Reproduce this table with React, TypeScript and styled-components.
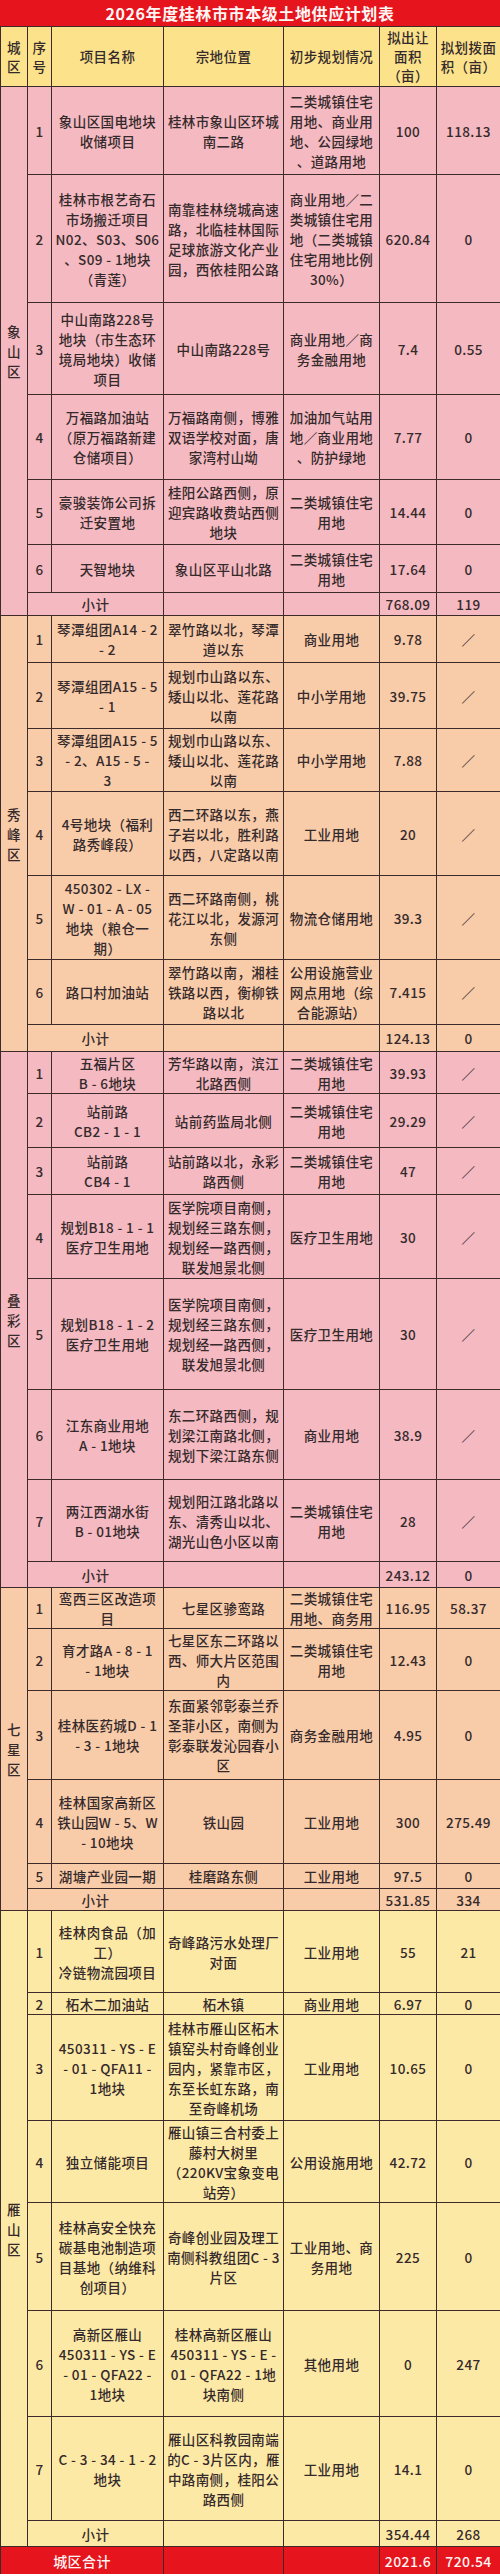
import React from "react";
import styled, { createGlobalStyle } from "styled-components";

type Tone = "pink" | "peach" | "cream";

type Plot = {
    no: string;
    name: string[];
    loc: string[];
    plan: string[];
    sell: string;
    alloc: string;
    h: number;
};

type Zone = {
    name: string;
    tone: Tone;
    plots: Plot[];
    subH: number;
    sell: string;
    alloc: string;
};

const tones: Record<Tone, string> = {
    pink: "#f4b9c1",
    peach: "#f8cba9",
    cream: "#fde9a6",
};

const GlobalStyle = createGlobalStyle`
    body {
        margin: 0;
        background: #ffffff;
        font-family: "Noto Sans CJK SC", "Noto Sans", sans-serif;
        color: #352a2b;
    }
`;

const Sheet = styled.div`
    width: 500px;
`;

const TitleBar = styled.div`
    height: 26px;
    background: #e5141d;
    color: #fff6f4;
    font-size: 16px;
    font-weight: 700;
    letter-spacing: 0.6px;
    display: flex;
    align-items: center;
    justify-content: center;
`;

const Table = styled.table`
    width: 500px;
    border-collapse: collapse;
    table-layout: fixed;
    font-size: 13.5px;
    font-weight: 500;
    letter-spacing: 0.4px;
    line-height: 20px;
`;

const HeadRow = styled.tr`
    height: 60px;
`;

const HeadCell = styled.th`
    background: #fce38b;
    border: 1px solid #3d2b2b;
    font-weight: 500;
    line-height: 19px;
    text-align: center;
    vertical-align: middle;
    padding: 0 1px;
`;

const BodyRow = styled.tr<{ $h: number }>`
    height: ${(p) => p.$h}px;
`;

const Cell = styled.td<{ $tone: Tone }>`
    background: ${(p) => tones[p.$tone]};
    border: 1px solid #3d2b2b;
    text-align: center;
    vertical-align: middle;
    padding: 0 1px;
    white-space: nowrap;
`;

const TotalCell = styled.td`
    background: #e5141d;
    color: #fff4f2;
    border: 1px solid #3d2b2b;
    text-align: center;
    vertical-align: middle;
    font-size: 14px;
`;

const Line = styled.span`
    display: block;
`;

const Lines: React.FC<{ items: string[] }> = ({ items }) => (
    <>
        {items.map((t, i) => (
            <Line key={i}>{t}</Line>
        ))}
    </>
);

const yiliao = ["医学院项目南侧，", "规划经三路东侧，", "规划经一路西侧，", "联发旭景北侧"];
const erlei = ["二类城镇住宅", "用地"];

const zones: Zone[] = [
    {
        name: "象山区",
        tone: "pink",
        subH: 23,
        sell: "768.09",
        alloc: "119",
        plots: [
            { no: "1", h: 88, name: ["象山区国电地块", "收储项目"], loc: ["桂林市象山区环城", "南二路"], plan: ["二类城镇住宅", "用地、商业用", "地、公园绿地", "、道路用地"], sell: "100", alloc: "118.13" },
            { no: "2", h: 128, name: ["桂林市根艺奇石", "市场搬迁项目", "N02、S03、S06", "、S09 - 1地块", "（青莲）"], loc: ["南靠桂林绕城高速", "路，北临桂林国际", "足球旅游文化产业", "园，西依桂阳公路"], plan: ["商业用地／二", "类城镇住宅用", "地（二类城镇", "住宅用地比例", "30%）"], sell: "620.84", alloc: "0" },
            { no: "3", h: 92, name: ["中山南路228号", "地块（市生态环", "境局地块）收储", "项目"], loc: ["中山南路228号"], plan: ["商业用地／商", "务金融用地"], sell: "7.4", alloc: "0.55" },
            { no: "4", h: 85, name: ["万福路加油站", "（原万福路新建", "仓储项目）"], loc: ["万福路南侧，博雅", "双语学校对面，唐", "家湾村山坳"], plan: ["加油加气站用", "地／商业用地", "、防护绿地"], sell: "7.77", alloc: "0" },
            { no: "5", h: 65, name: ["豪骏装饰公司拆", "迁安置地"], loc: ["桂阳公路西侧，原", "迎宾路收费站西侧", "地块"], plan: erlei, sell: "14.44", alloc: "0" },
            { no: "6", h: 48, name: ["天智地块"], loc: ["象山区平山北路"], plan: erlei, sell: "17.64", alloc: "0" },
        ],
    },
    {
        name: "秀峰区",
        tone: "peach",
        subH: 27,
        sell: "124.13",
        alloc: "0",
        plots: [
            { no: "1", h: 47, name: ["琴潭组团A14 - 2", "- 2"], loc: ["翠竹路以北，琴潭", "道以东"], plan: ["商业用地"], sell: "9.78", alloc: "／" },
            { no: "2", h: 66, name: ["琴潭组团A15 - 5", "- 1"], loc: ["规划巾山路以东、", "矮山以北、莲花路", "以南"], plan: ["中小学用地"], sell: "39.75", alloc: "／" },
            { no: "3", h: 63, name: ["琴潭组团A15 - 5", "- 2、A15 - 5 -", "3"], loc: ["规划巾山路以东、", "矮山以北、莲花路", "以南"], plan: ["中小学用地"], sell: "7.88", alloc: "／" },
            { no: "4", h: 84, name: ["4号地块（福利", "路秀峰段）"], loc: ["西二环路以东，燕", "子岩以北，胜利路", "以西，八定路以南"], plan: ["工业用地"], sell: "20", alloc: "／" },
            { no: "5", h: 84, name: ["450302 - LX -", "W - 01 - A - 05", "地块（粮仓一", "期）"], loc: ["西二环路南侧，桃", "花江以北，发源河", "东侧"], plan: ["物流仓储用地"], sell: "39.3", alloc: "／" },
            { no: "6", h: 65, name: ["路口村加油站"], loc: ["翠竹路以南，湘桂", "铁路以西，衡柳铁", "路以北"], plan: ["公用设施营业", "网点用地（综", "合能源站）"], sell: "7.415", alloc: "／" },
        ],
    },
    {
        name: "叠彩区",
        tone: "pink",
        subH: 26,
        sell: "243.12",
        alloc: "0",
        plots: [
            { no: "1", h: 42, name: ["五福片区", "B - 6地块"], loc: ["芳华路以南，滨江", "北路西侧"], plan: erlei, sell: "39.93", alloc: "／" },
            { no: "2", h: 54, name: ["站前路", "CB2 - 1 - 1"], loc: ["站前药监局北侧"], plan: erlei, sell: "29.29", alloc: "／" },
            { no: "3", h: 47, name: ["站前路", "CB4 - 1"], loc: ["站前路以北，永彩", "路西侧"], plan: erlei, sell: "47", alloc: "／" },
            { no: "4", h: 84, name: ["规划B18 - 1 - 1", "医疗卫生用地"], loc: yiliao, plan: ["医疗卫生用地"], sell: "30", alloc: "／" },
            { no: "5", h: 111, name: ["规划B18 - 1 - 2", "医疗卫生用地"], loc: yiliao, plan: ["医疗卫生用地"], sell: "30", alloc: "／" },
            { no: "6", h: 90, name: ["江东商业用地", "A - 1地块"], loc: ["东二环路西侧，规", "划梁江南路北侧，", "规划下梁江路东侧"], plan: ["商业用地"], sell: "38.9", alloc: "／" },
            { no: "7", h: 82, name: ["两江西湖水街", "B - 01地块"], loc: ["规划阳江路北路以", "东、清秀山以北、", "湖光山色小区以南"], plan: erlei, sell: "28", alloc: "／" },
        ],
    },
    {
        name: "七星区",
        tone: "peach",
        subH: 22,
        sell: "531.85",
        alloc: "334",
        plots: [
            { no: "1", h: 41, name: ["鸾西三区改造项", "目"], loc: ["七星区骖鸾路"], plan: ["二类城镇住宅", "用地、商务用"], sell: "116.95", alloc: "58.37" },
            { no: "2", h: 62, name: ["育才路A - 8 - 1", "- 1地块"], loc: ["七星区东二环路以", "西、师大片区范围", "内"], plan: erlei, sell: "12.43", alloc: "0" },
            { no: "3", h: 89, name: ["桂林医药城D - 1", "- 3 - 1地块"], loc: ["东面紧邻彰泰兰乔", "圣菲小区，南侧为", "彰泰联发沁园春小", "区"], plan: ["商务金融用地"], sell: "4.95", alloc: "0" },
            { no: "4", h: 84, name: ["桂林国家高新区", "铁山园W - 5、W", "- 10地块"], loc: ["铁山园"], plan: ["工业用地"], sell: "300", alloc: "275.49" },
            { no: "5", h: 25, name: ["湖塘产业园一期"], loc: ["桂磨路东侧"], plan: ["工业用地"], sell: "97.5", alloc: "0" },
        ],
    },
    {
        name: "雁山区",
        tone: "cream",
        subH: 26,
        sell: "354.44",
        alloc: "268",
        plots: [
            { no: "1", h: 82, name: ["桂林肉食品（加", "工）", "冷链物流园项目"], loc: ["奇峰路污水处理厂", "对面"], plan: ["工业用地"], sell: "55", alloc: "21" },
            { no: "2", h: 22, name: ["柘木二加油站"], loc: ["柘木镇"], plan: ["商业用地"], sell: "6.97", alloc: "0" },
            { no: "3", h: 106, name: ["450311 - YS - E", "- 01 - QFA11 -", "1地块"], loc: ["桂林市雁山区柘木", "镇窑头村奇峰创业", "园内，紧靠市区，", "东至长虹东路，南", "至奇峰机场"], plan: ["工业用地"], sell: "10.65", alloc: "0" },
            { no: "4", h: 82, name: ["独立储能项目"], loc: ["雁山镇三合村委上", "藤村大树里", "（220KV宝象变电", "站旁）"], plan: ["公用设施用地"], sell: "42.72", alloc: "0" },
            { no: "5", h: 108, name: ["桂林高安全快充", "碳基电池制造项", "目基地（纳维科", "创项目）"], loc: ["奇峰创业园及理工", "南侧科教组团C - 3", "片区"], plan: ["工业用地、商", "务用地"], sell: "225", alloc: "0" },
            { no: "6", h: 106, name: ["高新区雁山", "450311 - YS - E", "- 01 - QFA22 -", "1地块"], loc: ["桂林高新区雁山", "450311 - YS - E -", "01 - QFA22 - 1地", "块南侧"], plan: ["其他用地"], sell: "0", alloc: "247" },
            { no: "7", h: 104, name: ["C - 3 - 34 - 1 - 2", "地块"], loc: ["雁山区科教园南端", "的C - 3片区内，雁", "中路南侧，桂阳公", "路西侧"], plan: ["工业用地"], sell: "14.1", alloc: "0" },
        ],
    },
];

const ZoneBlock: React.FC<{ zone: Zone }> = ({ zone }) => {
    const t = zone.tone;
    return (
        <>
            {zone.plots.map((p, i) => (
                <BodyRow key={p.no} $h={p.h}>
                    {i === 0 && (
                        <Cell $tone={t} rowSpan={zone.plots.length + 1}>
                            <Lines items={zone.name.split("")} />
                        </Cell>
                    )}
                    <Cell $tone={t}>{p.no}</Cell>
                    <Cell $tone={t}><Lines items={p.name} /></Cell>
                    <Cell $tone={t}><Lines items={p.loc} /></Cell>
                    <Cell $tone={t}><Lines items={p.plan} /></Cell>
                    <Cell $tone={t}>{p.sell}</Cell>
                    <Cell $tone={t}>{p.alloc}</Cell>
                </BodyRow>
            ))}
            <BodyRow $h={zone.subH}>
                <Cell $tone={t} colSpan={2}>小计</Cell>
                <Cell $tone={t} />
                <Cell $tone={t} />
                <Cell $tone={t}>{zone.sell}</Cell>
                <Cell $tone={t}>{zone.alloc}</Cell>
            </BodyRow>
        </>
    );
};

const App: React.FC = () => {
    return (
        <Sheet>
            <GlobalStyle />
            <TitleBar>2026年度桂林市市本级土地供应计划表</TitleBar>
            <Table>
                <colgroup>
                    <col style={{ width: 27 }} />
                    <col style={{ width: 24 }} />
                    <col style={{ width: 112 }} />
                    <col style={{ width: 120 }} />
                    <col style={{ width: 96 }} />
                    <col style={{ width: 57 }} />
                    <col style={{ width: 64 }} />
                </colgroup>
                <thead>
                    <HeadRow>
                        <HeadCell><Lines items={["城", "区"]} /></HeadCell>
                        <HeadCell><Lines items={["序", "号"]} /></HeadCell>
                        <HeadCell>项目名称</HeadCell>
                        <HeadCell>宗地位置</HeadCell>
                        <HeadCell>初步规划情况</HeadCell>
                        <HeadCell><Lines items={["拟出让", "面积", "（亩）"]} /></HeadCell>
                        <HeadCell><Lines items={["拟划拨面", "积（亩）"]} /></HeadCell>
                    </HeadRow>
                </thead>
                <tbody>
                    {zones.map((z) => (
                        <ZoneBlock key={z.name} zone={z} />
                    ))}
                    <BodyRow $h={28}>
                        <TotalCell colSpan={3}>城区合计</TotalCell>
                        <TotalCell />
                        <TotalCell />
                        <TotalCell>2021.6</TotalCell>
                        <TotalCell>720.54</TotalCell>
                    </BodyRow>
                </tbody>
            </Table>
        </Sheet>
    );
};

export default App;
